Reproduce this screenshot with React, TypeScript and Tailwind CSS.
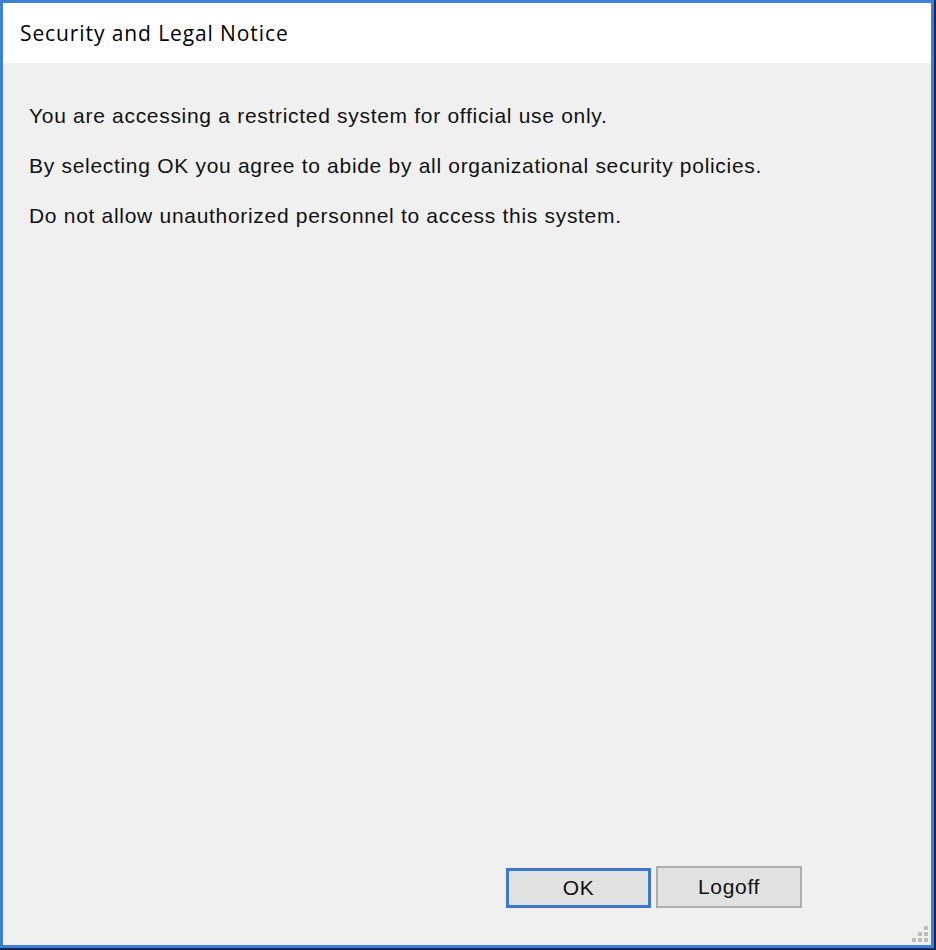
const lines = [
  "You are accessing a restricted system for official use only.",
  "By selecting OK you agree to abide by all organizational security policies.",
  "Do not allow unauthorized personnel to access this system.",
];

const ResizeGrip = () => {
  const dots = [
    [12, 0],
    [6, 6],
    [12, 6],
    [0, 12],
    [6, 12],
    [12, 12],
  ];
  return (
    <svg width="16" height="16" className="absolute right-[3px] bottom-[3px]">
      {dots.map(([x, y], i) => (
        <rect key={i} x={x} y={y} width="4" height="4" fill="#bcbcbc" />
      ))}
    </svg>
  );
};

const App = () => {
  return (
    <div className="w-[936px] h-[950px] bg-[#0e2a5c] font-['Liberation_Sans',Arial,sans-serif]">
      <div className="relative flex flex-col w-[934px] h-[948px] border-[3px] border-[#3d80d6] bg-[#f0f0f0]">
        <div className="h-[60px] bg-white flex items-center pl-[17px] pt-[1px]">
          <span className="text-[21px] text-black font-['Open_Sans',sans-serif] tracking-[0.9px]">
            Security and Legal Notice
          </span>
        </div>
        <div className="flex flex-col gap-[26px] pl-[26px] pt-[41px] text-[21px] leading-[24px] tracking-[0.7px] text-[#111]">
          {lines.map((line) => (
            <p key={line}>{line}</p>
          ))}
        </div>
        <div className="flex-1" />
        <div className="flex justify-end gap-[5px] pr-[129px] pb-[37px] text-[21px] tracking-[0.7px] text-[#111]">
          <button className="w-[145px] h-[40px] border-[3px] border-[#3a78d2] bg-[#e1e1e1] mt-[2px]">
            OK
          </button>
          <button className="w-[146px] h-[42px] border-2 border-[#adadad] bg-[#e1e1e1]">
            Logoff
          </button>
        </div>
        <ResizeGrip />
      </div>
    </div>
  );
};

export default App;
